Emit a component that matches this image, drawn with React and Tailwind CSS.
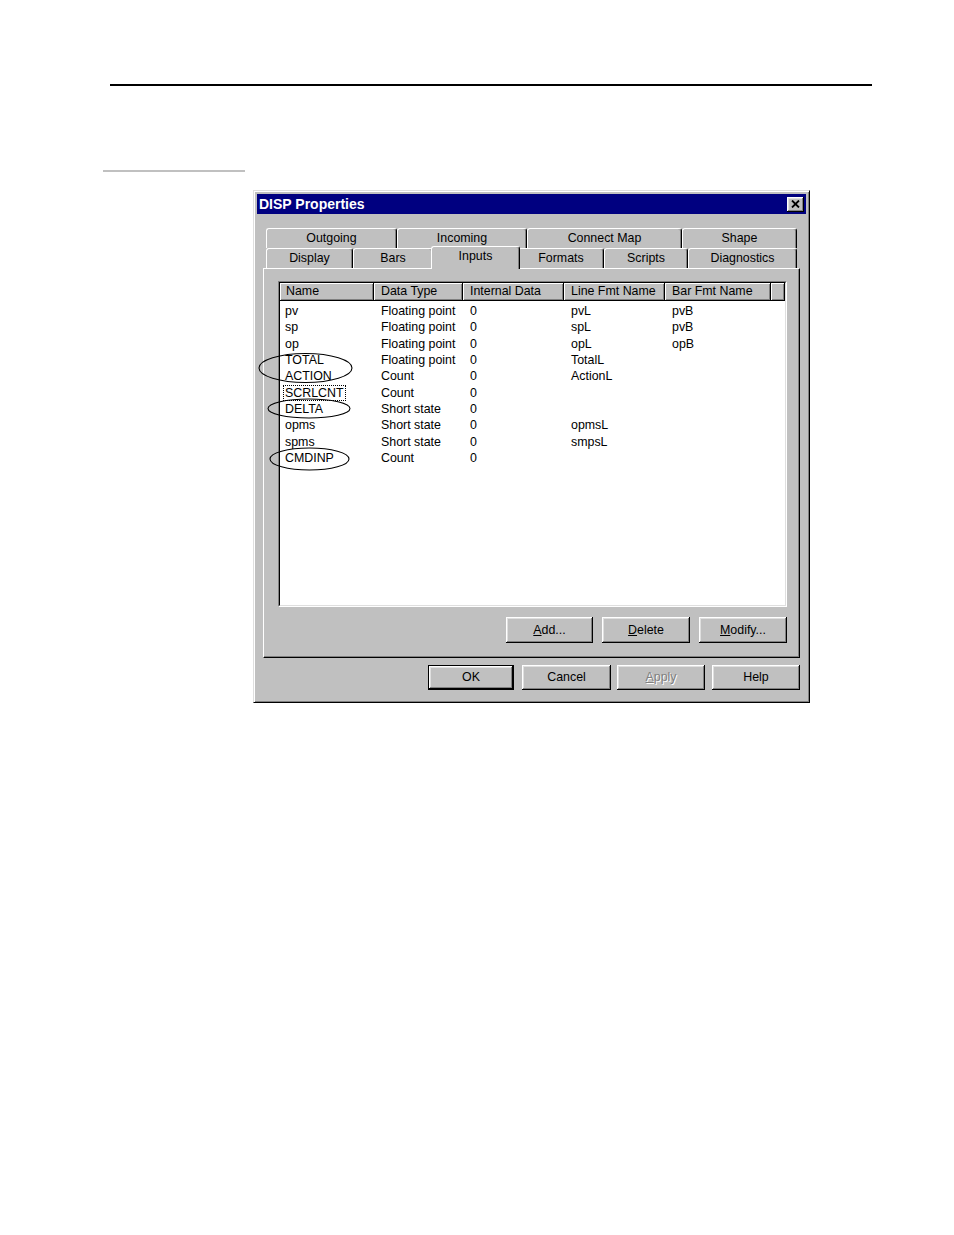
import React from 'react'

const raised = "bg-[#c0c0c0] shadow-[inset_-1px_-1px_#000,inset_1px_1px_#fff,inset_-2px_-2px_#808080,inset_2px_2px_#dfdfdf]";

const rows = [
  ["pv", "Floating point", "0", "pvL", "pvB"],
  ["sp", "Floating point", "0", "spL", "pvB"],
  ["op", "Floating point", "0", "opL", "opB"],
  ["TOTAL", "Floating point", "0", "TotalL", ""],
  ["ACTION", "Count", "0", "ActionL", ""],
  ["SCRLCNT", "Count", "0", "", ""],
  ["DELTA", "Short state", "0", "", ""],
  ["opms", "Short state", "0", "opmsL", ""],
  ["spms", "Short state", "0", "smpsL", ""],
  ["CMDINP", "Count", "0", "", ""],
];

const backTabs = [
  ["Outgoing", "w-[131px]"],
  ["Incoming", "w-[130px]"],
  ["Connect Map", "w-[155px]"],
  ["Shape", "w-[115px]"],
];

const frontTabs = [
  ["Display", "w-[87px]"],
  ["Bars", "w-[80px]"],
  ["Inputs", "w-[89px]"],
  ["Formats", "w-[86px]"],
  ["Scripts", "w-[84px]"],
  ["Diagnostics", "w-[109px]"],
];

const Tab = ({ label, width, selected }) => (
  <div
    className={
      "flex items-center justify-center rounded-t-[3px] bg-[#c0c0c0] border-t border-l border-white border-r border-r-black shadow-[inset_-1px_0_#808080] " +
      width +
      (selected ? " relative z-10 -mx-[2px] -mt-[2px] -mb-[1px] h-[23px] pb-[3px]" : " h-[20px]")
    }
  >
    {label}
  </div>
);

const Btn = ({ children, width, h = "h-[26px]", extra = "" }) => (
  <div className={`flex items-center justify-center ${width} ${h} ${raised} ${extra}`}>
    {children}
  </div>
);

const App = () => {
  return (
    <div className="relative w-[954px] h-[1235px] bg-white text-black text-[12.4px] leading-none font-['Liberation_Sans',Arial,sans-serif] overflow-hidden">
      {/* page rules */}
      <div className="ml-[110px] mt-[84px] w-[762px] h-[2px] bg-black" />
      <div className="ml-[103px] mt-[84px] w-[142px] h-[2px] bg-[#c0c0c0]" />

      {/* dialog */}
      <div className="ml-[253px] mt-[18px] w-[557px] h-[513px] p-[3px] bg-[#c0c0c0] border border-t-[#dfdfdf] border-l-[#dfdfdf] border-r-black border-b-black shadow-[inset_1px_1px_#fff,inset_-1px_-1px_#808080]">
        <div className="flex items-center justify-between h-[20px] bg-[#000080] pl-[2px] pr-[2px]">
          <span className="text-white font-bold text-[14px]">DISP Properties</span>
          <div className={`flex items-center justify-center w-[17px] h-[15px] ${raised}`}>
            <svg width="9" height="8" viewBox="0 0 9 8">
              <path d="M1 0.5 L8 7.5 M8 0.5 L1 7.5" stroke="#000" strokeWidth="1.8" />
            </svg>
          </div>
        </div>

        <div className="px-[6px]">
          {/* tabs */}
          <div className="mt-[13px] px-[3px]">
            <div className="flex h-[21px] items-end">
              {backTabs.map(([l, w]) => (
                <Tab key={l} label={l} width={w} />
              ))}
            </div>
            <div className="flex h-[20px] items-end">
              {frontTabs.map(([l, w]) => (
                <Tab key={l} label={l} width={w} selected={l === "Inputs"} />
              ))}
            </div>
          </div>

          {/* panel */}
          <div className="w-[537px] h-[390px] border-t border-l border-white border-r border-b border-r-black border-b-black shadow-[inset_-1px_-1px_#808080] pt-[12px] pl-[14px]">
            <div className="w-[509px] h-[326px] border border-t-[#808080] border-l-[#808080] border-r-white border-b-white">
              <div className="relative w-full h-full bg-white border border-t-black border-l-black border-r-[#dfdfdf] border-b-[#dfdfdf] overflow-hidden">
                <div className="flex h-[18px]">
                  {[
                    ["Name", "w-[94px] pl-[6px]"],
                    ["Data Type", "w-[89px] pl-[7px]"],
                    ["Internal Data", "w-[101px] pl-[7px]"],
                    ["Line Fmt Name", "w-[101px] pl-[7px]"],
                    ["Bar Fmt Name", "w-[106px] pl-[7px]"],
                    ["", "flex-1"],
                  ].map(([h, c], i) => (
                    <div
                      key={i}
                      className={`flex items-center bg-[#c0c0c0] border-r border-b border-black shadow-[inset_1px_1px_#fff,inset_-1px_-1px_#808080] ${c}`}
                    >
                      {h}
                    </div>
                  ))}
                </div>
                <div className="pt-[2px]">
                  {rows.map((r) => (
                    <div key={r[0]} className="flex h-[16.33px] items-center">
                      <div className="w-[94px] pl-[3px]">
                        <span
                          className={
                            "inline-block px-[1px] py-[1px] border " +
                            (r[0] === "SCRLCNT" ? "border-dotted border-black" : "border-transparent")
                          }
                        >
                          {r[0]}
                        </span>
                      </div>
                      <div className="w-[89px] pl-[7px]">{r[1]}</div>
                      <div className="w-[101px] pl-[7px]">{r[2]}</div>
                      <div className="w-[101px] pl-[7px]">{r[3]}</div>
                      <div className="w-[106px] pl-[7px]">{r[4]}</div>
                    </div>
                  ))}
                </div>
              </div>
            </div>

            <div className="flex w-[509px] justify-end gap-[9px] mt-[10px]">
              <Btn width="w-[87px]"><span><u>A</u>dd...</span></Btn>
              <Btn width="w-[88px]"><span><u>D</u>elete</span></Btn>
              <Btn width="w-[88px]"><span><u>M</u>odify...</span></Btn>
            </div>
          </div>

          {/* dialog buttons */}
          <div className="flex w-[537px] justify-end mt-[7px]">
            <Btn width="w-[86px]" h="h-[25px]" extra="border border-black">OK</Btn>
            <Btn width="w-[89px]" h="h-[25px]" extra="ml-[8px]">Cancel</Btn>
            <Btn width="w-[88px]" h="h-[25px]" extra="ml-[6px]">
              <span className="text-[#808080] [text-shadow:1px_1px_0_#fff]"><u>A</u>pply</span>
            </Btn>
            <Btn width="w-[88px]" h="h-[25px]" extra="ml-[7px]">Help</Btn>
          </div>
        </div>
      </div>

      {/* hand-drawn ellipses over the list */}
      <svg className="absolute inset-0 pointer-events-none" width="954" height="1235">
        <g fill="none" stroke="#000" strokeWidth="1.1">
          <ellipse cx="305.5" cy="368" rx="46.5" ry="14.5" />
          <ellipse cx="309" cy="408.5" rx="41" ry="9.5" />
          <ellipse cx="309.5" cy="459" rx="39.5" ry="11" />
        </g>
      </svg>
    </div>
  )
}

export default App
